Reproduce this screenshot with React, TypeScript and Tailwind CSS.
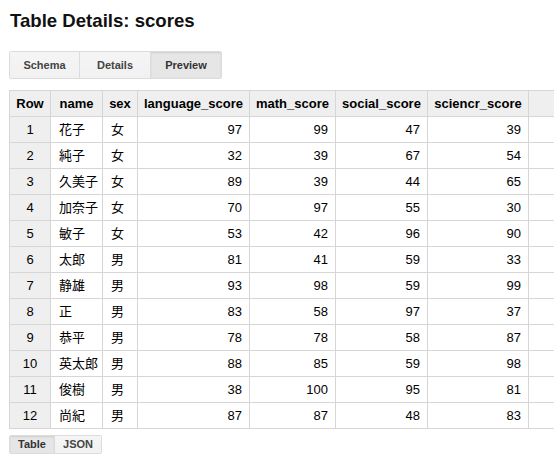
import React from "react";

const rows: [number, string, string, number, number, number, number][] = [
  [1, "花子", "女", 97, 99, 47, 39],
  [2, "純子", "女", 32, 39, 67, 54],
  [3, "久美子", "女", 89, 39, 44, 65],
  [4, "加奈子", "女", 70, 97, 55, 30],
  [5, "敏子", "女", 53, 42, 96, 90],
  [6, "太郎", "男", 81, 41, 59, 33],
  [7, "静雄", "男", 93, 98, 59, 99],
  [8, "正", "男", 83, 58, 97, 37],
  [9, "恭平", "男", 78, 78, 58, 87],
  [10, "英太郎", "男", 88, 85, 59, 98],
  [11, "俊樹", "男", 38, 100, 95, 81],
  [12, "尚紀", "男", 87, 87, 48, 83],
];

const font = { fontFamily: '"Liberation Sans", Arial, "Noto Sans CJK JP", sans-serif' };

export default function App() {
  return (
    <div className="w-[554px] h-[476px] overflow-hidden bg-white text-black" style={font}>
      <div className="pl-[10px] pt-[9px]">
        <h1 className="text-[18.6px] leading-[23px] font-bold text-[#111]">Table Details: scores</h1>
      </div>
      <div className="ml-[9px] mt-[19px] flex w-fit border border-[#dcdcdc] rounded-[2px] overflow-hidden h-[28px]">
        <div className="w-[70px] flex items-center justify-center text-[11px] font-bold text-[#444] bg-gradient-to-b from-[#f5f5f5] to-[#f1f1f1] border-r border-[#dcdcdc]">Schema</div>
        <div className="w-[71px] flex items-center justify-center text-[11px] font-bold text-[#444] bg-gradient-to-b from-[#f5f5f5] to-[#f1f1f1] border-r border-[#dcdcdc]">Details</div>
        <div className="w-[70px] flex items-center justify-center text-[11px] font-bold text-[#333] bg-[#e6e6e6] shadow-[inset_0_1px_2px_rgba(0,0,0,0.1)]">Preview</div>
      </div>
      <div className="ml-[9px] mt-[11px]">
        <table className="border-collapse table-fixed text-[13px] w-[580px]">
          <colgroup>
            <col className="w-[41px]" />
            <col className="w-[52px]" />
            <col className="w-[35px]" />
            <col className="w-[112px]" />
            <col className="w-[86px]" />
            <col className="w-[92px]" />
            <col className="w-[101px]" />
            <col className="w-[61px]" />
          </colgroup>
          <thead>
            <tr className="h-[26px] bg-[#efefef]">
              <th className="border border-[#d6d6d6] font-bold text-center px-0">Row</th>
              <th className="border border-[#d6d6d6] font-bold text-center">name</th>
              <th className="border border-[#d6d6d6] font-bold text-center">sex</th>
              <th className="border border-[#d6d6d6] font-bold text-center">language_score</th>
              <th className="border border-[#d6d6d6] font-bold text-center">math_score</th>
              <th className="border border-[#d6d6d6] font-bold text-center">social_score</th>
              <th className="border border-[#d6d6d6] font-bold text-center">sciencr_score</th>
              <th className="border border-[#d6d6d6]"></th>
            </tr>
          </thead>
          <tbody>
            {rows.map((r) => (
              <tr key={r[0]} className="h-[26px]">
                <td className="border border-[#d6d6d6] bg-[#efefef] text-center">{r[0]}</td>
                <td className="border border-[#d6d6d6] pl-[8px] whitespace-nowrap">{r[1]}</td>
                <td className="border border-[#d6d6d6] pl-[8px]">{r[2]}</td>
                <td className="border border-[#d6d6d6] text-right pr-[7px]">{r[3]}</td>
                <td className="border border-[#d6d6d6] text-right pr-[7px]">{r[4]}</td>
                <td className="border border-[#d6d6d6] text-right pr-[7px]">{r[5]}</td>
                <td className="border border-[#d6d6d6] text-right pr-[7px]">{r[6]}</td>
                <td className="border border-[#d6d6d6]"></td>
              </tr>
            ))}
          </tbody>
        </table>
      </div>
      <div className="ml-[9px] mt-[6px] flex w-fit border border-[#dcdcdc] rounded-[2px] overflow-hidden h-[19px]">
        <div className="w-[45px] flex items-center justify-center text-[11px] font-bold text-[#333] bg-[#e6e6e6] shadow-[inset_0_1px_2px_rgba(0,0,0,0.1)] border-r border-[#dcdcdc]">Table</div>
        <div className="w-[46px] flex items-center justify-center text-[11px] font-bold text-[#444] bg-gradient-to-b from-[#f5f5f5] to-[#f1f1f1]">JSON</div>
      </div>
    </div>
  );
}
